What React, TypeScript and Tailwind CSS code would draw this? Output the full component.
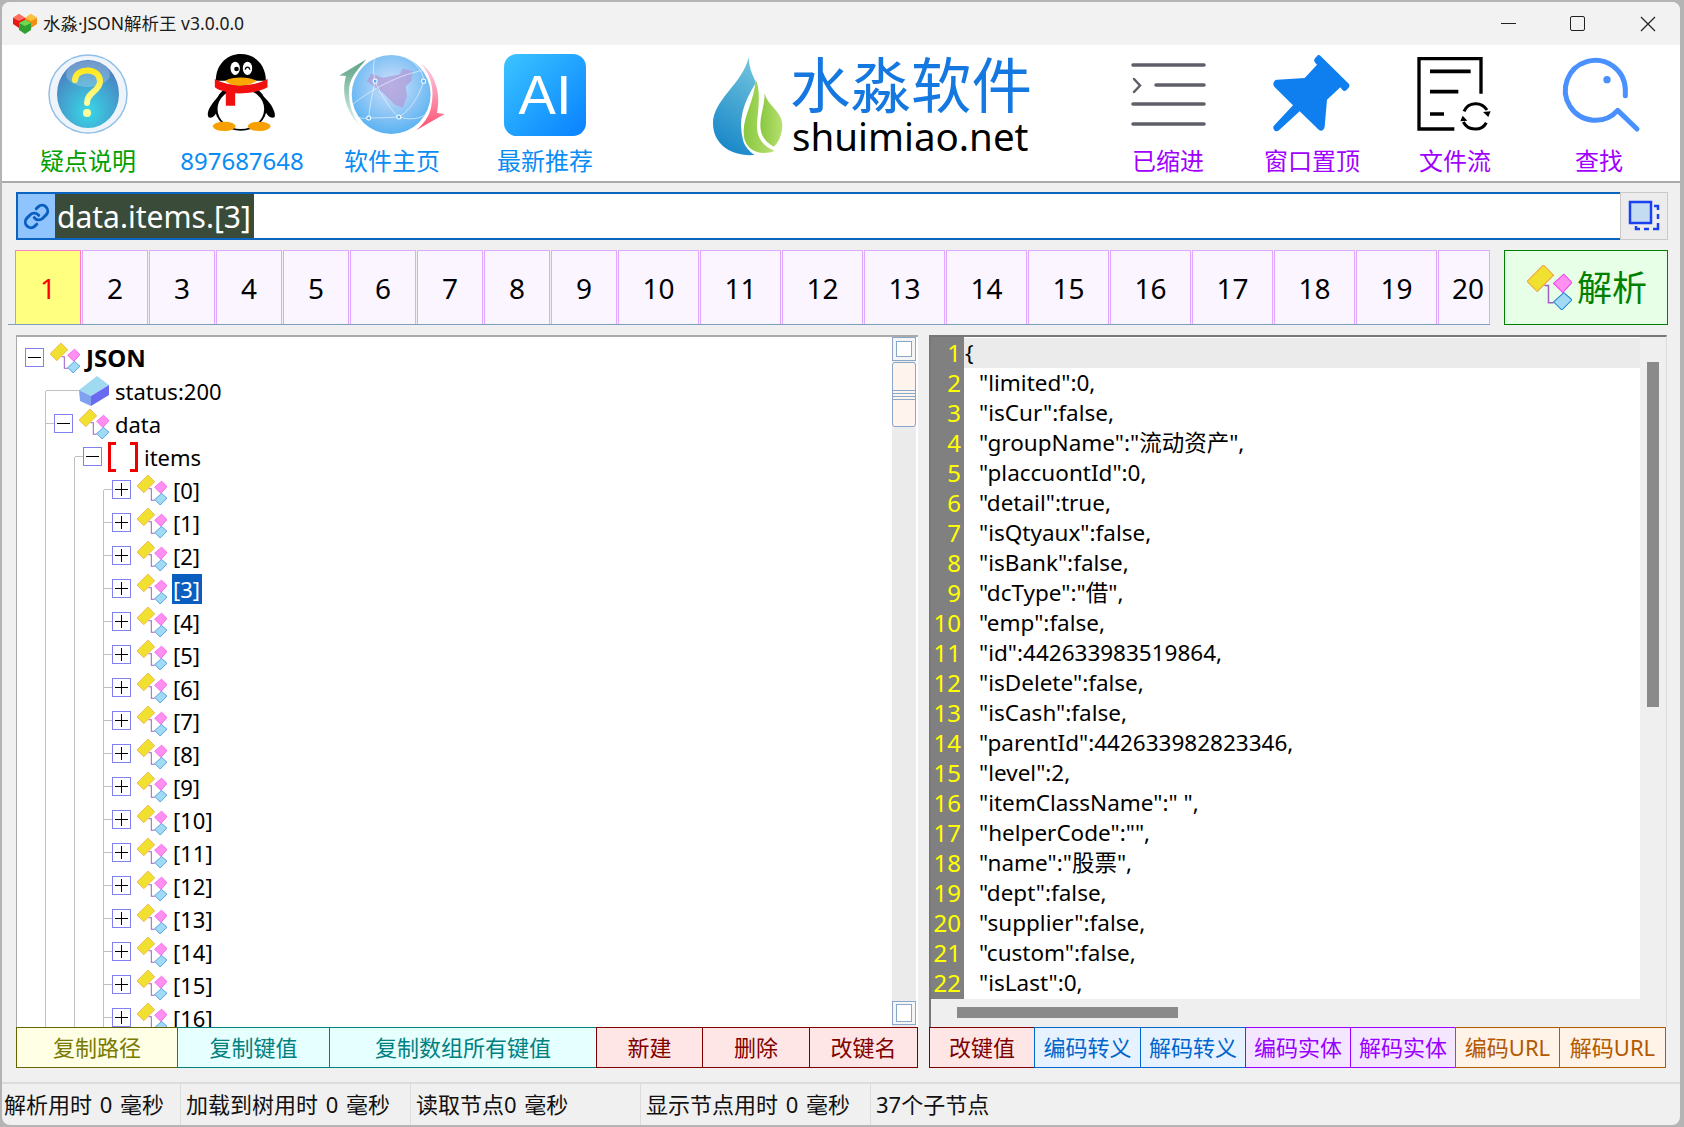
import { Link } from 'lucide-react';

const jsonLines = [
  '{',
  '"limited":0,',
  '"isCur":false,',
  '"groupName":"流动资产",',
  '"placcuontId":0,',
  '"detail":true,',
  '"isQtyaux":false,',
  '"isBank":false,',
  '"dcType":"借",',
  '"emp":false,',
  '"id":442633983519864,',
  '"isDelete":false,',
  '"isCash":false,',
  '"parentId":442633982823346,',
  '"level":2,',
  '"itemClassName":" ",',
  '"helperCode":"",',
  '"name":"股票",',
  '"dept":false,',
  '"supplier":false,',
  '"custom":false,',
  '"isLast":0,',
];

const leftButtons = [
  { label: '复制路径', cls: 'w-[162px] bg-[#ffffe6] border-[#666600] text-[#7a7a00]' },
  { label: '复制键值', cls: 'w-[153px] bg-[#e6ffff] border-[#008080] text-[#008080]' },
  { label: '复制数组所有键值', cls: 'w-[268px] bg-[#e6ffff] border-[#008080] text-[#008080]' },
  { label: '新建', cls: 'w-[107px] bg-[#ffe6e6] border-[#800000] text-[#800000]' },
  { label: '删除', cls: 'w-[108px] bg-[#ffe6e6] border-[#800000] text-[#800000]' },
  { label: '改键名', cls: 'w-[109px] bg-[#ffe6e6] border-[#800000] text-[#800000]' },
];

const rightButtons = [
  { label: '改键值', cls: 'w-[106px] bg-[#ffe6e6] border-[#800000] text-[#800000]' },
  { label: '编码转义', cls: 'w-[107px] bg-[#e6f2ff] border-[#0066cc] text-[#0066cc]' },
  { label: '解码转义', cls: 'w-[106px] bg-[#e6f2ff] border-[#0066cc] text-[#0066cc]' },
  { label: '编码实体', cls: 'w-[106px] bg-[#f5e6ff] border-[#9900ff] text-[#9900ff]' },
  { label: '解码实体', cls: 'w-[106px] bg-[#f5e6ff] border-[#9900ff] text-[#9900ff]' },
  { label: '编码URL', cls: 'w-[105px] bg-[#fff2e6] border-[#b35900] text-[#b35900]' },
  { label: '解码URL', cls: 'w-[107px] bg-[#fff2e6] border-[#b35900] text-[#b35900]' },
];

const tabs = Array.from({ length: 20 }, (_, i) => i + 1);

function KeyIcon({ size = 30 }: { size?: number }) {
  return (
    <svg width={size} height={size} viewBox="0 0 44 44" className="shrink-0">
      <path d="M17 20H21V37H26" fill="none" stroke="#a060c8" strokeWidth="1.5" />
      <path d="M0 16L16 0L26 10L10 26Z" fill="#f0e030" stroke="#f0a040" strokeWidth="1" />
      <path d="M26 18L36 9L44 17L35 27Z" fill="#ff90f0" stroke="#f040f0" strokeWidth="1" />
      <path d="M26 36L36 27L44 34L34 44Z" fill="#a0daf4" stroke="#2080d0" strokeWidth="1" />
    </svg>
  );
}

function ValueIcon() {
  return (
    <svg width="30" height="30" viewBox="0 0 30 30" className="shrink-0">
      <path d="M0 14L18 0L30 9L12 20Z" fill="#a0daf0" />
      <path d="M0 14L12 20V30L1 25Z" fill="#80a0f0" />
      <path d="M12 20L30 9V19L12 30Z" fill="#6a6af0" />
    </svg>
  );
}

function BracketIcon() {
  return (
    <svg width="30" height="30" viewBox="0 0 30 30" className="shrink-0">
      <path d="M8 1.500H1.500V28.500H8M22 1.500H28.500V28.500H22" fill="none" stroke="#f00000" strokeWidth="3" />
    </svg>
  );
}

function ToggleBox({ open }: { open: boolean }) {
  return (
    <span className="relative w-[19px] h-[19px] shrink-0 border border-[#8080f0] bg-white flex items-center justify-center">
      <span className="w-[13px] h-px bg-black" />
      {!open && <span className="absolute left-[8px] top-[2px] w-px h-[13px] bg-black" />}
    </span>
  );
}

// level = number of guide columns in front of the row
function TreeRow({
  level,
  first,
  open,
  hook,
  icon,
  text,
  bold,
  selected,
}: {
  level: number;
  first?: boolean;
  open?: boolean;
  hook?: boolean;
  icon: React.ReactNode;
  text: string;
  bold?: boolean;
  selected?: boolean;
}) {
  const cells = Array.from({ length: level }, (_, i) => i);
  return (
    <div className="flex items-center h-[33px] shrink-0">
      {cells.map((i) =>
        first && i === level - 1 ? (
          <span key={i} className="w-[29px] h-1/2 self-end border-r border-[#c0c0c0] shrink-0" />
        ) : (
          <span key={i} className="w-[29px] h-full border-r border-[#c0c0c0] shrink-0" />
        ),
      )}
      {level > 0 && <span className={hook ? 'w-[33px] h-px bg-[#c0c0c0] shrink-0' : 'w-[8px] h-px bg-[#c0c0c0] shrink-0'} />}
      {level === 0 && <span className="w-[8px] shrink-0" />}
      {!hook && <ToggleBox open={!!open} />}
      <span className={hook ? 'ml-0 flex' : 'ml-[6px] flex'}>{icon}</span>
      {bold ? (
        <span className="ml-[6px] font-bold text-[24px] leading-[30px] whitespace-pre">{text}</span>
      ) : selected ? (
        <span className="ml-[5px] pl-[1px] pr-[2px] bg-[#0a5ebf] text-white text-[22px] leading-[30px] whitespace-pre">{text}</span>
      ) : (
        <span className="ml-[6px] text-[22px] leading-[30px] whitespace-pre">{text}</span>
      )}
    </div>
  );
}

function ToolItem({
  cls,
  label,
  color,
  children,
}: {
  cls: string;
  label: string;
  color: string;
  children: React.ReactNode;
}) {
  return (
    <div className={'flex flex-col items-center shrink-0 pt-[3px] ' + cls}>
      <div className="h-[92px] flex items-center justify-center">{children}</div>
      <div className={'mt-[5px] h-[32px] text-[24px] leading-[32px] whitespace-pre ' + color}>{label}</div>
    </div>
  );
}

function QuestionOrb() {
  return (
    <svg width="82" height="82" viewBox="0 0 82 82">
      <defs>
        <radialGradient id="orb" cx="50%" cy="75%" r="70%">
          <stop offset="0%" stopColor="#38d8e8" />
          <stop offset="100%" stopColor="#4a80c0" />
        </radialGradient>
        <linearGradient id="mark" x1="0" y1="0" x2="0" y2="1">
          <stop offset="0%" stopColor="#ffe820" />
          <stop offset="100%" stopColor="#ffffa0" />
        </linearGradient>
      </defs>
      <ellipse cx="41" cy="41" rx="39" ry="39" fill="#eef4fa" stroke="#90c0e8" strokeWidth="1.5" />
      <ellipse cx="41" cy="41" rx="31" ry="34" fill="url(#orb)" />
      <ellipse cx="41" cy="21" rx="22" ry="13" fill="#ffffff" opacity="0.22" />
      <path d="M28 27C28 14 54 14 53 29C52 39 40 39 40 50" fill="none" stroke="url(#mark)" strokeWidth="6" strokeLinecap="round" />
      <circle cx="40" cy="60" r="4" fill="#ffffa0" />
    </svg>
  );
}

function Penguin() {
  return (
    <svg width="87" height="90" viewBox="0 0 260 270">
      <path d="M60 140C35 165 20 190 28 205C38 210 48 200 52 190L200 190C205 200 215 210 226 205C232 190 215 160 190 140Z" fill="#000" />
      <ellipse cx="125" cy="175" rx="78" ry="70" fill="#000" />
      <ellipse cx="125" cy="180" rx="70" ry="60" fill="#fff" />
      <ellipse cx="75" cy="232" rx="34" ry="14" fill="#f8a000" />
      <ellipse cx="180" cy="232" rx="34" ry="14" fill="#f8a000" />
      <path d="M50 95C50 45 85 15 125 15C165 15 200 45 200 95Z" fill="#000" />
      <path d="M47 90C90 115 160 115 205 90L205 115C180 130 130 135 108 133L108 170H80L80 128C65 125 55 122 47 115Z" fill="#f01010" />
      <path d="M78 95C100 82 150 82 172 95C150 115 100 115 78 95Z" fill="#f8a800" />
      <ellipse cx="108" cy="58" rx="14" ry="20" fill="#fff" />
      <ellipse cx="145" cy="58" rx="14" ry="20" fill="#fff" />
      <circle cx="112" cy="60" r="7" fill="#000" />
      <path d="M138 62C140 52 150 52 152 62" fill="none" stroke="#000" strokeWidth="4" />
    </svg>
  );
}

function GlobeIcon() {
  return (
    <svg width="112" height="87" viewBox="410 5 335 260">
      <defs>
        <radialGradient id="globe" cx="50%" cy="40%" r="60%">
          <stop offset="0%" stopColor="#d4e2fa" />
          <stop offset="100%" stopColor="#5ab2f2" />
        </radialGradient>
        <linearGradient id="arrowG" x1="0" y1="0" x2="0" y2="1">
          <stop offset="0%" stopColor="#5aa080" />
          <stop offset="100%" stopColor="#e0f4f0" />
        </linearGradient>
        <linearGradient id="arrowR" x1="0" y1="0" x2="0" y2="1">
          <stop offset="0%" stopColor="#fad0ea" />
          <stop offset="100%" stopColor="#ff5070" />
        </linearGradient>
      </defs>
      <circle cx="575" cy="135" r="118" fill="url(#globe)" />
      <path d="M502 95L515 72L550 85L600 75L610 58L640 65L635 95L618 110L622 140L610 175L585 165L550 130L525 112Z" fill="#b09cd8" opacity="0.75" />
      <path d="M460 165C500 130 600 70 690 60M527 95C545 140 580 190 598 202M672 95C660 140 630 185 598 202C560 205 530 205 508 205C510 170 520 130 527 95M508 205C480 210 470 200 460 190M598 202C640 215 670 205 690 185M530 20C515 50 525 80 527 95M672 95C672 70 650 40 620 25"
        fill="none" stroke="#e8f4ff" strokeWidth="2" />
      {[[527, 95], [672, 95], [508, 205], [598, 202]].map(([x, y]) => (
        <circle key={x} cx={x} cy={y} r="6" fill="#5ab2f2" stroke="#fff" strokeWidth="3" />
      ))}
      <path d="M483 228C440 190 425 130 440 80L420 78L500 30C480 55 455 80 450 110C445 160 460 200 483 228Z" fill="url(#arrowG)" />
      <path d="M665 43C705 70 725 130 712 190L735 193L650 242C670 225 690 200 695 170C705 120 695 80 665 43Z" fill="url(#arrowR)" />
    </svg>
  );
}

function Drop() {
  return (
    <svg width="70" height="112" viewBox="40 0 210 336" className="shrink-0">
      <defs>
        <linearGradient id="dropB" x1="0.6" y1="0" x2="0.3" y2="1">
          <stop offset="0%" stopColor="#6cc0dc" />
          <stop offset="100%" stopColor="#1585c8" />
        </linearGradient>
        <linearGradient id="dropG" x1="0" y1="0" x2="1" y2="0">
          <stop offset="0%" stopColor="#88c840" />
          <stop offset="100%" stopColor="#b8e070" />
        </linearGradient>
      </defs>
      <path d="M147 22C150 70 165 80 168 100C130 160 115 210 130 270C135 290 150 305 165 315C90 320 40 280 40 220C40 150 130 100 147 22Z" fill="url(#dropB)" />
      <path d="M168 88C185 125 175 180 172 220C170 260 185 285 225 303C190 315 150 310 135 270C120 210 165 160 168 88Z" fill="url(#dropG)" />
      <path d="M195 130C205 170 248 185 248 225C248 255 235 280 222 290C195 275 182 255 182 225C182 195 195 165 195 130Z" fill="url(#dropG)" />
    </svg>
  );
}

function IndentIcon() {
  return (
    <svg width="76" height="66" viewBox="0 0 76 66" fill="none" stroke="#5f5f6a" strokeWidth="3.5" strokeLinecap="round">
      <path d="M3 4H74M26 24H74M3 43H74M3 63H74" />
      <path d="M4 18L10 24.500L4 31" strokeWidth="2.500" />
    </svg>
  );
}

function PinIcon() {
  return (
    <svg width="84" height="92" viewBox="30 0 250 276">
      <path
        d="M163 32L172 22C175 20 178 21 180 23L266 108C268 112 268 116 264 120L258 127C254 130 250 130 247 127L240 118L200 155L193 236C192 244 184 252 176 246L118 190L56 247C50 252 44 250 41 245C38 240 38 236 42 232L98 172L42 116C36 108 40 96 50 95L133 90L170 50L163 42C161 38 161 35 163 32Z"
        fill="#0f7ff0"
      />
    </svg>
  );
}

function DocFlowIcon() {
  return (
    <svg width="80" height="92" viewBox="470 0 240 276" fill="none">
      <path d="M588 243H482V32H668V137" stroke="#000" strokeWidth="10" />
      <path d="M515 70H637M515 131H600M515 198H557" stroke="#000" strokeWidth="11" />
      <path d="M617 190C630 160 670 160 686 186M684 224C670 250 630 250 615 222" stroke="#000" strokeWidth="9" />
      <path d="M674 192L697 190L690 207ZM627 218L606 220L613 203Z" fill="#000" />
    </svg>
  );
}

function SearchIcon() {
  return (
    <svg width="84" height="92" viewBox="890 0 252 276" fill="none">
      <path d="M1095 143V125A90 90 0 1 0 1072 187L1130 243" stroke="#4a90ff" strokeWidth="15" strokeLinecap="round" strokeLinejoin="round" />
      <circle cx="1040" cy="95" r="11" fill="#4a90ff" />
    </svg>
  );
}

function ExpandIcon() {
  return (
    <svg width="32" height="32" viewBox="0 0 32 32" fill="none">
      <rect x="2" y="2" width="21" height="21" fill="#c4dcf2" stroke="#1a40f0" strokeWidth="2.5" />
      <path d="M26 6H30V10M30 14V19M30 23V29H25M21 29H16M12 29H8V26" stroke="#1a40f0" strokeWidth="2.5" />
    </svg>
  );
}

function CubesIcon() {
  return (
    <svg width="24" height="21" viewBox="0 0 24 21">
      <path d="M0 5L6 1L12 5V11L6 15L0 11Z" fill="#e81818" />
      <path d="M6 1L12 5L6 8L0 5Z" fill="#ff7060" />
      <path d="M12 5L18 1L24 5V11L18 15L12 11Z" fill="#f09010" />
      <path d="M18 1L24 5L18 8L12 5Z" fill="#ffc040" />
      <path d="M6 10L12 7L18 10V17L12 21L6 17Z" fill="#30a030" />
      <path d="M12 7L18 10L12 13L6 10Z" fill="#70d850" />
    </svg>
  );
}

export default function App() {
  return (
    <div className="w-[1684px] h-[1127px] bg-[#b4b4b4] pl-[2px] pt-[2px] overflow-hidden font-['Noto_Sans','Noto_Sans_CJK_SC',sans-serif] text-black">
      <div className="w-[1678px] h-[1123px] rounded-lg overflow-hidden bg-[#f0f0f0] flex flex-col">
        {/* title bar */}
        <div className="h-[43px] shrink-0 bg-[#f3f2f3] flex items-center pl-[11px]">
          <CubesIcon />
          <span className="ml-[6px] text-[17.5px] text-[#1a1a1a] whitespace-pre">水淼·JSON解析王 v3.0.0.0</span>
          <div className="ml-auto mr-[12px] flex items-center">
            <span className="w-[40px] flex justify-center"><span className="w-[15px] h-px bg-[#222]" /></span>
            <span className="ml-[29px] w-[40px] flex justify-center"><span className="w-[15px] h-[15px] rounded-[2px] border border-[#222]" /></span>
            <span className="ml-[31px] w-[40px] flex justify-center">
              <svg width="16" height="16" viewBox="0 0 16 16" stroke="#222" strokeWidth="1.2"><path d="M1 1L15 15M15 1L1 15" /></svg>
            </span>
          </div>
        </div>

        {/* toolbar */}
        <div className="h-[138px] shrink-0 bg-white border-b-2 border-[#aaaaaa] flex">
          <ToolItem cls="w-[150px] ml-[11px]" label="疑点说明" color="text-[#00a000]"><QuestionOrb /></ToolItem>
          <ToolItem cls="w-[150px] ml-[4px]" label="897687648" color="text-[#0a8cf5]"><Penguin /></ToolItem>
          <ToolItem cls="w-[150px]" label="软件主页" color="text-[#0a8cf5]"><GlobeIcon /></ToolItem>
          <ToolItem cls="w-[150px] ml-[3px]" label="最新推荐" color="text-[#0a8cf5]">
            <div className="mt-[2px] w-[82px] h-[82px] rounded-[13px] bg-gradient-to-br from-[#3cc4ff] to-[#0a80ff] flex items-center justify-center text-white text-[56px] leading-none font-['Liberation_Sans',sans-serif]">
              AI
            </div>
          </ToolItem>
          <div className="ml-[93px] shrink-0 flex items-start pt-[5px]">
            <Drop />
            <div className="ml-[7px] flex flex-col">
              <span className="mt-[4px] h-[62px] text-[60.5px] leading-[62px] text-[#1478e0] whitespace-pre">水淼软件</span>
              <span className="ml-[2px] h-[40px] text-[38.5px] leading-[40px] whitespace-pre">shuimiao.net</span>
            </div>
          </div>
          <ToolItem cls="w-[130px] ml-[71px]" label="已缩进" color="text-[#a000ff]"><IndentIcon /></ToolItem>
          <ToolItem cls="w-[130px] ml-[14px]" label="窗口置顶" color="text-[#a000ff]"><PinIcon /></ToolItem>
          <ToolItem cls="w-[130px] ml-[13px]" label="文件流" color="text-[#a000ff]"><DocFlowIcon /></ToolItem>
          <ToolItem cls="w-[130px] ml-[14px]" label="查找" color="text-[#a000ff]"><SearchIcon /></ToolItem>
        </div>

        {/* path bar */}
        <div className="mt-[9px] h-[48px] shrink-0 ml-[14px] mr-[12px] flex">
          <div className="flex-1 flex bg-white border-y-2 border-[#0a64c0] border-l-2">
            <div className="w-[37px] bg-[#90c4ff] flex items-center justify-center">
              <Link size={27} strokeWidth={2.6} color="#0a5ec0" />
            </div>
            <span className="pl-[2px] pr-[3px] pt-[1px] bg-[#3b4b3a] text-white text-[30px] leading-[44px] whitespace-pre">data.items.[3]</span>
          </div>
          <div className="w-[48px] bg-[#ececec] border border-[#c8c8c8] flex items-center justify-center">
            <ExpandIcon />
          </div>
        </div>

        {/* tabs */}
        <div className="mt-[10px] h-[75px] shrink-0 flex">
          <div className="ml-[6px] pl-[7px] border-b border-[#7f9fc0] flex gap-px">
            {tabs.map((n) => (
              <div
                key={n}
                className={
                  'flex items-center justify-center text-[28px] ' +
                  (n === 1
                    ? 'w-[66px] bg-[#ffff80] border border-[#ff80c0] border-b-0 text-[#ff0000]'
                    : n < 10
                      ? 'w-[66px] bg-[#fbf5ff] border border-[#e0a8ff] border-b-0'
                      : n < 20
                        ? 'w-[81px] bg-[#fbf5ff] border border-[#e0a8ff] border-b-0'
                        : 'w-[52px] pl-[8px] bg-[#fbf5ff] border border-[#e0a8ff] border-b-0')
                }
              >
                {n}
              </div>
            ))}
          </div>
          <div className="ml-[14px] w-[164px] border border-[#008000] bg-[#e6ffe6] flex items-center pl-[22px]">
            <KeyIcon size={45} />
            <span className="ml-[5px] text-[35px] leading-none text-[#008000]">解析</span>
          </div>
        </div>

        {/* panels */}
        <div className="mt-[10px] h-[692px] shrink-0 flex ml-[14px]">
          <div className="w-[902px] flex border-t-2 border-l border-[#aaaaaa] bg-white overflow-hidden">
            <div className="flex-1 overflow-hidden flex flex-col pt-[4px]">
              <TreeRow level={0} open icon={<KeyIcon />} text="JSON" bold />
              <TreeRow level={1} first hook icon={<ValueIcon />} text="status:200" />
              <TreeRow level={1} open icon={<KeyIcon />} text="data" />
              <TreeRow level={2} first open icon={<BracketIcon />} text="items" />
              {Array.from({ length: 17 }, (_, i) => (
                <TreeRow
                  key={i}
                  level={3}
                  first={i === 0}
                  icon={<KeyIcon />}
                  text={'[' + i + ']'}
                  selected={i === 3}
                />
              ))}
            </div>
            <div className="w-[24px] bg-[#ebebeb] flex flex-col shrink-0 mr-[2px]">
              <div className="h-[24px] border border-[#8aa6c8] bg-[#f5f5f5] flex items-center justify-center">
                <span className="w-[16px] h-[16px] border border-[#8aa6c8] bg-white" />
              </div>
              <div className="mt-px h-[65px] rounded-[3px] border border-[#8aa6c8] bg-[#fff3ee] flex flex-col justify-center gap-[2px]">
                <span className="h-px bg-[#8aa6c8]" />
                <span className="h-px bg-[#8aa6c8]" />
                <span className="h-px bg-[#8aa6c8]" />
                <span className="h-px bg-[#8aa6c8]" />
              </div>
              <div className="mt-auto mb-[2px] h-[24px] border border-[#8aa6c8] bg-[#f5f5f5] flex items-center justify-center">
                <span className="w-[16px] h-[18px] border border-[#8aa6c8] bg-white" />
              </div>
            </div>
          </div>

          <div className="ml-[11px] w-[738px] flex flex-col border-t-2 border-l-2 border-r border-[#777777] border-r-[#dddddd] bg-[#efefef]">
            <div className="flex h-[662px] shrink-0">
              <div className="w-[33px] shrink-0 bg-[#808080] pt-[1px] flex flex-col items-end pr-[3px] text-[#ffff00]">
                {jsonLines.map((_, i) => (
                  <div key={i} className="h-[30px] text-[24px] leading-[30px]">{i + 1}</div>
                ))}
              </div>
              <div className="flex-1 bg-white pt-[1px] overflow-hidden">
                {jsonLines.map((line, i) => (
                  <div
                    key={i}
                    className={
                      'h-[30px] text-[22.5px] leading-[30px] whitespace-pre ' +
                      (i === 0 ? 'bg-[#ebebeb] pl-[1px]' : 'pl-[15px]')
                    }
                  >
                    {line}
                  </div>
                ))}
              </div>
              <div className="w-[26px] shrink-0 pt-[25px] pl-[7px]">
                <div className="w-[12px] h-[345px] bg-[#8a8a8a]" />
              </div>
            </div>
            <div className="pt-[8px] pl-[26px]">
              <div className="w-[221px] h-[11px] bg-[#8a8a8a]" />
            </div>
          </div>
        </div>

        {/* action buttons */}
        <div className="h-[41px] shrink-0 flex ml-[14px]">
          <div className="flex">
            {leftButtons.map((b) => (
              <div key={b.label} className={'-mr-px flex items-center justify-center border text-[22px] whitespace-pre ' + b.cls}>
                {b.label}
              </div>
            ))}
          </div>
          <div className="ml-[12px] flex">
            {rightButtons.map((b) => (
              <div key={b.label} className={'-mr-px flex items-center justify-center border text-[22px] whitespace-pre ' + b.cls}>
                {b.label}
              </div>
            ))}
          </div>
        </div>

        {/* status bar */}
        <div className="mt-[14px] flex-1 border-t-2 border-[#dcdcdc] flex text-[22px] text-[#111] [word-spacing:2px]">
          <div className="w-[179px] pl-[2px] border-r border-[#dcdcdc] flex items-center whitespace-pre">解析用时 0 毫秒</div>
          <div className="w-[230px] pl-[5px] border-r border-[#dcdcdc] flex items-center whitespace-pre">加载到树用时 0 毫秒</div>
          <div className="w-[230px] pl-[5px] border-r border-[#dcdcdc] flex items-center whitespace-pre">读取节点0 毫秒</div>
          <div className="w-[230px] pl-[5px] border-r border-[#dcdcdc] flex items-center whitespace-pre">显示节点用时 0 毫秒</div>
          <div className="flex-1 pl-[5px] flex items-center whitespace-pre">37个子节点</div>
        </div>
      </div>
    </div>
  );
}
